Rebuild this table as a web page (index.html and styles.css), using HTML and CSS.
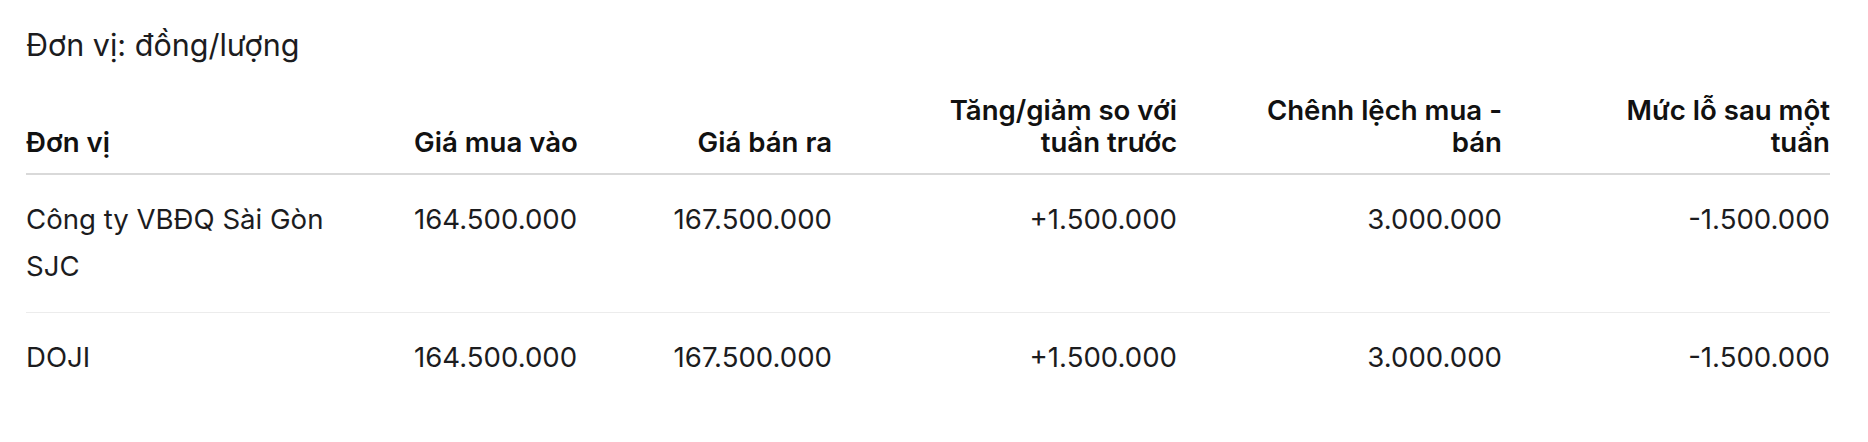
FILE: index.html
```html
<!DOCTYPE html>
<html lang="vi">
<head>
<meta charset="utf-8">
<title>Giá vàng</title>
<link rel="stylesheet" href="styles.css">
</head>
<body>
<main class="page">
  <p class="unit">Đơn vị: đồng/lượng</p>
  <table class="price-table">
    <colgroup>
      <col class="c1"><col class="c2"><col class="c3"><col class="c4"><col class="c5"><col class="c6">
    </colgroup>
    <thead>
      <tr>
        <th class="k1">Đơn vị</th>
        <th class="k2">Giá mua vào</th>
        <th class="k3 num">Giá bán ra</th>
        <th class="k4 num">Tăng/giảm so với tuần trước</th>
        <th class="k5 num">Chênh lệch mua - bán</th>
        <th class="k6 num">Mức lỗ sau một tuần</th>
      </tr>
    </thead>
    <tbody>
      <tr>
        <td class="k1">Công ty VBĐQ Sài Gòn SJC</td>
        <td class="k2">164.500.000</td>
        <td class="k3 num">167.500.000</td>
        <td class="k4 num">+1.500.000</td>
        <td class="k5 num">3.000.000</td>
        <td class="k6 num">-1.500.000</td>
      </tr>
      <tr>
        <td class="k1">DOJI</td>
        <td class="k2">164.500.000</td>
        <td class="k3 num">167.500.000</td>
        <td class="k4 num">+1.500.000</td>
        <td class="k5 num">3.000.000</td>
        <td class="k6 num">-1.500.000</td>
      </tr>
    </tbody>
  </table>
</main>
</body>
</html>
```

FILE: styles.css
```css
html, body {
  margin: 0;
  padding: 0;
  background: #ffffff;
}

body {
  font-family: "Inter", "Noto Sans", "Liberation Sans", sans-serif;
  color: #1c1c1e;
}

.page {
  padding: 27px 0 0 26px;
}

.unit {
  margin: 0;
  font-size: 30.5px;
  line-height: 36px;
  font-weight: 400;
  color: #1c1c1e;
}

.price-table {
  margin-top: 15px;
  width: 1804px;
  table-layout: fixed;
  border-collapse: collapse;
  font-size: 27.6px;
}

.c1 { width: 332px; }
.c2 { width: 242px; }
.c3 { width: 232px; }
.c4 { width: 345px; }
.c5 { width: 325px; }
.c6 { width: 328px; }

.price-table th {
  font-weight: 600;
  line-height: 32px;
  padding-top: 16px;
  padding-bottom: 15px;
  vertical-align: bottom;
  text-align: left;
  color: #111111;
  border-bottom: 2px solid #d9d9d9;
}

.price-table td {
  font-weight: 400;
  line-height: 47px;
  padding-top: 21px;
  padding-bottom: 22px;
  vertical-align: top;
  text-align: left;
}

.price-table tbody tr + tr td {
  border-top: 1px solid #ececec;
}

.price-table .num { text-align: right; }

.k1 { padding-left: 0; padding-right: 0; }
.k2 { padding-left: 56px; padding-right: 0; }
.k3 { padding-left: 56px; padding-right: 0; }
.k4 { padding-left: 86px; padding-right: 0; }
.k5 { padding-left: 66px; padding-right: 0; }
.k6 { padding-left: 96px; padding-right: 0; }
```
